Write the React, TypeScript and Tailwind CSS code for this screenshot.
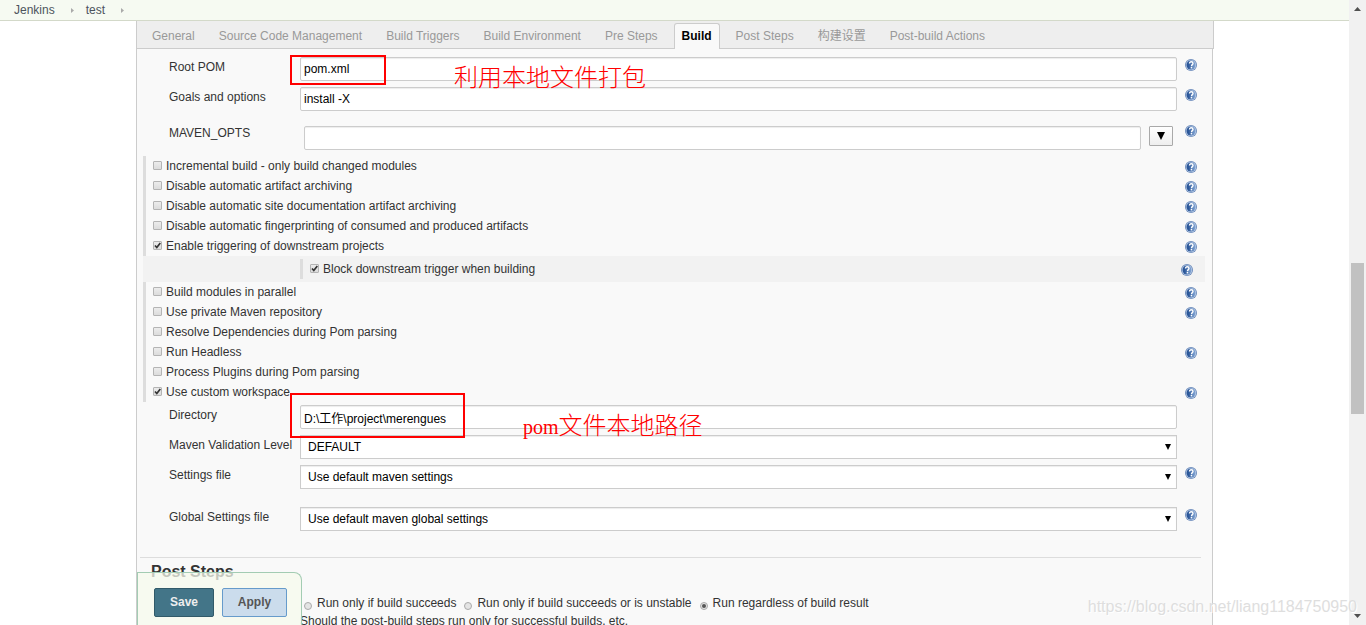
import React, { ReactNode } from 'react';

interface OptionItem {
    id: string;
    label: string;
    checked?: boolean;
    help?: boolean;
}

const tabs = [
    'General',
    'Source Code Management',
    'Build Triggers',
    'Build Environment',
    'Pre Steps',
    'Build',
    'Post Steps',
    '构建设置',
    'Post-build Actions',
];

const optionsBefore: OptionItem[] = [
    { id: 'incremental', label: 'Incremental build - only build changed modules', help: true },
    { id: 'archiving', label: 'Disable automatic artifact archiving', help: true },
    { id: 'site-archiving', label: 'Disable automatic site documentation artifact archiving', help: true },
    { id: 'fingerprinting', label: 'Disable automatic fingerprinting of consumed and produced artifacts', help: true },
    { id: 'downstream', label: 'Enable triggering of downstream projects', checked: true, help: true },
];

const optionsAfter: OptionItem[] = [
    { id: 'parallel', label: 'Build modules in parallel', help: true },
    { id: 'private-repo', label: 'Use private Maven repository', help: true },
    { id: 'resolve-deps', label: 'Resolve Dependencies during Pom parsing' },
    { id: 'headless', label: 'Run Headless', help: true },
    { id: 'plugins', label: 'Process Plugins during Pom parsing' },
    { id: 'workspace', label: 'Use custom workspace', checked: true, help: true },
];

const postStepModes = [
    { id: 'succeeds', label: 'Run only if build succeeds' },
    { id: 'unstable', label: 'Run only if build succeeds or is unstable' },
    { id: 'always', label: 'Run regardless of build result', checked: true },
];

const HelpIcon = () => (
    <a href="#help" aria-label="Help" className="block size-3 shrink-0">
        <svg viewBox="0 0 12 12" className="block size-3">
            <defs>
                <linearGradient id="help-fill" x1="0" y1="0" x2="1" y2="0">
                    <stop offset="0.2" stopColor="#2a5698" />
                    <stop offset="1" stopColor="#86a8d6" />
                </linearGradient>
            </defs>
            <circle cx="6" cy="6" r="6" fill="#6b8aba" />
            <circle cx="6" cy="6" r="5.2" fill="#b9cce6" />
            <circle cx="6" cy="6" r="4.500" fill="url(#help-fill)" />
            <path d="M4.500 4.500C4.500 3.300 5.300 2.800 6.200 2.800S8 3.300 8 4.400C8 5.600 6.500 5.700 6.500 7.200" fill="none" stroke="#fff" strokeWidth="1.400" />
            <rect x="5.700" y="8" width="1.500" height="1.400" fill="#fff" />
        </svg>
    </a>
);

const Caret = ({ className }: { className: string }) => (
    <svg viewBox="0 0 6 6" className={className}>
        <path d="M0 0h6L3 6z" fill="#000" />
    </svg>
);

const CheckBox = ({ id, checked }: { id: string; checked?: boolean }) => (
    <span className="relative mb-px block size-[9px] shrink-0">
        <input
            id={id}
            type="checkbox"
            defaultChecked={checked}
            className="peer block size-[9px] appearance-none rounded-[1px] border border-[#b4b4b4] bg-linear-to-b from-[#ececec] to-[#dcdcdc]"
        />
        <svg viewBox="0 0 9 9" className="pointer-events-none absolute inset-0 hidden size-[9px] peer-checked:block">
            <path d="M2 4.500L3.800 6.500L7.300 2" fill="none" stroke="#333" strokeWidth="1.700" />
        </svg>
    </span>
);

const OptionRow = ({ option }: { option: OptionItem }) => (
    <div className="flex h-5 items-center border-l-3 border-[#ddd] pl-[7px]">
        <CheckBox id={option.id} checked={option.checked} />
        <label htmlFor={option.id} className="flex-1 pl-1">{option.label}</label>
        {option.help && <div className="w-5 pt-[2px]"><HelpIcon /></div>}
    </div>
);

const FormRow = ({ id, label, help, children }: { id: string; label: string; help?: boolean; children: ReactNode }) => (
    <div className="flex min-h-[30px] items-start">
        <label htmlFor={id} className="w-[163px] shrink-0 pt-[5px] pl-8 whitespace-nowrap">{label}</label>
        <div className="relative flex-1 pt-[3px]">{children}</div>
        <div className="w-[35px] shrink-0 pt-[5px] pl-2">{help && <HelpIcon />}</div>
    </div>
);

const inputClass =
    'block h-6 w-full rounded-[2px] border border-[#ccc] bg-white px-[3px] text-black shadow-[inset_0_1px_1px_rgba(0,0,0,0.075)] outline-none';

const SelectBox = ({ id, value }: { id: string; value: string }) => (
    <div className="relative">
        <select
            id={id}
            className="block h-6 w-full appearance-none border border-[#ccc] bg-white px-[7px] text-black shadow-[inset_0_1px_1px_rgba(0,0,0,0.075)] outline-none"
        >
            <option>{value}</option>
        </select>
        <Caret className="pointer-events-none absolute top-[9px] right-[6px] size-[6px]" />
    </div>
);

const Crumb = ({ children }: { children: ReactNode }) => (
    <li className="flex items-center">
        <a href="#crumb">{children}</a>
        <svg viewBox="0 0 3 5" className="mr-3 ml-4 h-[5px] w-[3px]">
            <path d="M0 0l3 2.500L0 5z" fill="#aaa" />
        </svg>
    </li>
);

const Scrollbar = () => (
    <div className="flex w-[17px] shrink-0 flex-col items-center justify-between bg-[#f1f1f1] pt-[7px] pb-[7px]">
        <svg viewBox="0 0 7 4" className="h-1 w-[7px]"><path d="M0 4h7L3.500 0z" fill="#505050" /></svg>
        <div className="h-[151px] w-[13px] translate-y-[26px] bg-[#c1c1c1]" />
        <svg viewBox="0 0 7 4" className="h-1 w-[7px]"><path d="M0 0h7L3.500 4z" fill="#505050" /></svg>
    </div>
);

export default function App() {
    return (
        <div className="relative flex h-screen overflow-hidden bg-white font-['Liberation_Sans','Noto_Sans_CJK_SC',sans-serif] text-[12px] leading-4 text-[#333]">
            <div className="flex min-w-0 flex-1 flex-col">
                <nav className="h-[21px] shrink-0 border-b border-[#d3d9c9] bg-[#f6faf2] pl-[14px] text-[#4d545d]">
                    <ol className="flex h-5 items-center">
                        <Crumb>Jenkins</Crumb>
                        <Crumb>test</Crumb>
                    </ol>
                </nav>

                <main className="relative flex min-h-0 flex-1 flex-col pr-[135px] pl-[136px]">
                    <div className="flex h-7 shrink-0 items-end border-x border-b border-[#ccc] bg-[#eee] pl-[3px]">
                        {tabs.map((tab) => (
                            <button
                                key={tab}
                                type="button"
                                className={
                                    tab === 'Build'
                                        ? 'mx-1 -mb-px h-[26px] rounded-t-[3px] border border-b-0 border-[#ccc] bg-[#f9f9f9] px-[7px] pb-[2px] font-bold whitespace-nowrap text-black'
                                        : 'mx-1 -mb-px h-[26px] border border-b-0 border-transparent px-[7px] pb-[2px] whitespace-nowrap text-[#999]'
                                }
                            >
                                {tab}
                            </button>
                        ))}
                    </div>

                    <form className="mr-px flex-1 overflow-hidden border-x border-[#ccc] bg-[#f9f9f9] pt-[5px]">
                        <FormRow id="root-pom" label="Root POM" help>
                            <input id="root-pom" type="text" defaultValue="pom.xml" className={inputClass} />
                            <div className="pointer-events-none absolute top-px -left-[10px] z-10 h-[30px] w-24 border-2 border-[#f00]" />
                            <span className="pointer-events-none absolute top-[10px] left-[154px] z-10 text-[24px] leading-7 font-light whitespace-nowrap text-[#f00]">
                                利用本地文件打包
                            </span>
                        </FormRow>
                        <FormRow id="goals" label="Goals and options" help>
                            <input id="goals" type="text" defaultValue="install -X" className={inputClass} />
                        </FormRow>
                        <div className="pt-[6px] pb-[6px]">
                            <FormRow id="maven-opts" label="MAVEN_OPTS" help>
                                <div className="flex items-start gap-2 pt-[3px] pr-1 pl-1">
                                    <input id="maven-opts" type="text" className={inputClass} />
                                    <button
                                        type="button"
                                        aria-label="Expand"
                                        className="flex h-5 w-6 shrink-0 items-center justify-center rounded-[1px] border border-[#a9a9a9] bg-linear-to-b from-[#fff] to-[#eee]"
                                    >
                                        <Caret className="size-2" />
                                    </button>
                                </div>
                            </FormRow>
                        </div>

                        <div className="pr-[7px] pl-[6px]">
                            {optionsBefore.map((option) => <OptionRow key={option.id} option={option} />)}
                            <div className="bg-[#f2f2f2] py-[3px] pr-1 pl-[157px]">
                                <OptionRow option={{ id: 'block', label: 'Block downstream trigger when building', checked: true, help: true }} />
                            </div>
                            {optionsAfter.map((option) => <OptionRow key={option.id} option={option} />)}
                        </div>

                        <FormRow id="directory" label="Directory">
                            <input id="directory" type="text" defaultValue="D:\工作\project\merengues" className={inputClass} />
                            <div className="pointer-events-none absolute -top-[9px] -left-[10px] z-10 h-[45px] w-[175px] border-2 border-[#f00]" />
                            <span className="pointer-events-none absolute top-[10px] left-[223px] z-10 text-[24px] leading-7 font-light whitespace-nowrap text-[#f00]">
                                <span className="font-['Liberation_Serif',serif] text-[20px]">pom</span>文件本地路径
                            </span>
                        </FormRow>
                        <FormRow id="validation" label="Maven Validation Level">
                            <SelectBox id="validation" value="DEFAULT" />
                        </FormRow>
                        <FormRow id="settings" label="Settings file" help>
                            <SelectBox id="settings" value="Use default maven settings" />
                        </FormRow>
                        <div className="pt-3">
                            <FormRow id="global-settings" label="Global Settings file" help>
                                <SelectBox id="global-settings" value="Use default maven global settings" />
                            </FormRow>
                        </div>

                        <section className="mt-[23px] mr-[11px] ml-[3px] border-t border-[#ddd] pt-1">
                            <h2 className="pl-[11px] text-[16px] leading-5 font-bold">Post Steps</h2>
                            <div className="flex gap-2 pt-[13px] pl-[164px] whitespace-nowrap">
                                {postStepModes.map((mode) => (
                                    <label key={mode.id} className="flex items-start gap-[5px]">
                                        <span className="relative mt-[7px] block size-2">
                                            <input
                                                type="radio"
                                                name="post-steps"
                                                defaultChecked={mode.checked}
                                                className="peer block size-2 appearance-none rounded-full border border-[#aaa] bg-[#e4e4e4]"
                                            />
                                            <span className="pointer-events-none absolute inset-[2px] hidden rounded-full bg-[#555] peer-checked:block" />
                                        </span>
                                        {mode.label}
                                    </label>
                                ))}
                            </div>
                            <p className="pt-[2px] pl-40">Should the post-build steps run only for successful builds, etc.</p>
                        </section>
                    </form>

                    <div className="absolute bottom-0 left-[137px] flex h-[53px] gap-2 rounded-tr-lg border-t border-r border-l border-[#a3ccb3] bg-[#f6f9ec]/75 pt-[15px] pr-[14px] pl-4">
                        <button type="button" className="h-[29px] w-[60px] rounded-[2px] border border-[#315a69] bg-[#437588] pb-[2px] font-bold text-[#eee]">
                            Save
                        </button>
                        <button type="button" className="h-[29px] w-[65px] rounded-[2px] border border-[#669bcb] bg-[#cbdcec] pb-[2px] font-bold text-[#555]">
                            Apply
                        </button>
                    </div>
                </main>
            </div>
            <Scrollbar />
            <span className="pointer-events-none absolute right-[9px] bottom-[8px] text-[16px] leading-5 text-[#dedede] [text-shadow:1px_1px_0_#fff]">
                https://blog.csdn.net/liang1184750950
            </span>
        </div>
    );
}
